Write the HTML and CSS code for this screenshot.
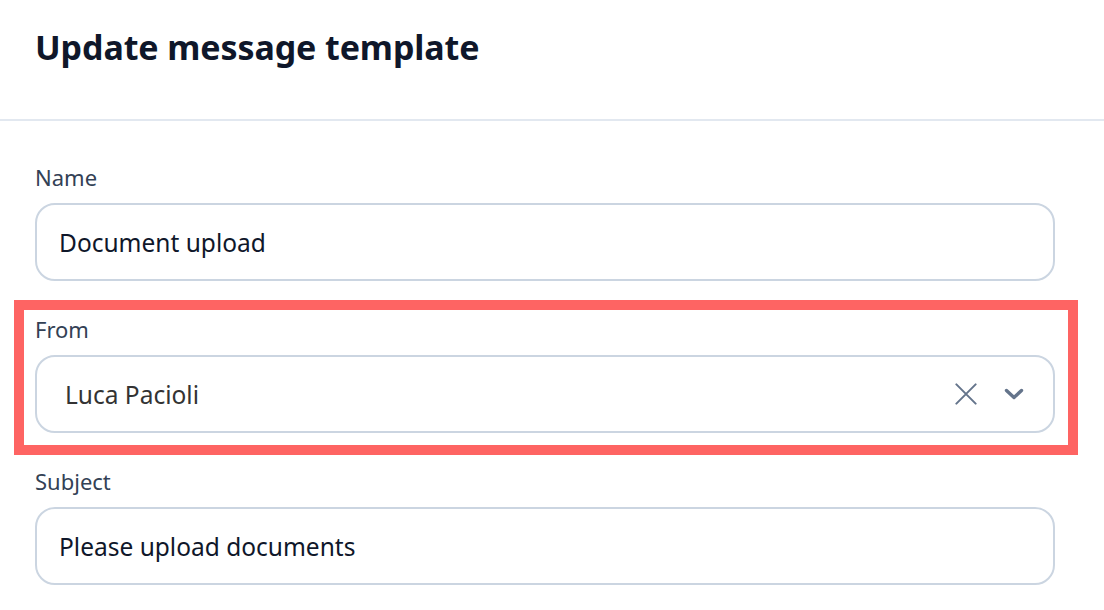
FILE: index.html
```html
<!DOCTYPE html>
<html lang="en">
<head>
<meta charset="utf-8">
<title>Update message template</title>
<link rel="stylesheet" href="styles.css">
</head>
<body>
<header class="header">
  <h1 class="title">Update message template</h1>
</header>
<main class="form">
  <div class="field">
    <label class="label">Name</label>
    <div class="input">Document upload</div>
  </div>
  <div class="field field-highlight">
    <label class="label">From</label>
    <div class="select">
      <span class="select-value">Luca Pacioli</span>
      <span class="select-icons">
        <svg class="icon-clear" width="24" height="24" viewBox="0 0 24 24" fill="none" stroke="#64748b" stroke-width="2.2" stroke-linecap="round"><path d="M1.5 1.5 L22.5 22.5 M22.5 1.5 L1.5 22.5"/></svg>
        <svg class="icon-chevron" width="20" height="12" viewBox="0 0 20 12" fill="none" stroke="#64748b" stroke-width="3.4" stroke-linecap="round" stroke-linejoin="round"><path d="M2.5 2.5 L10 9.5 L17.5 2.5"/></svg>
      </span>
    </div>
  </div>
  <div class="field">
    <label class="label">Subject</label>
    <div class="input">Please upload documents</div>
  </div>
</main>
</body>
</html>
```
FILE: styles.css
```css
* { box-sizing: border-box; }
html, body { margin: 0; padding: 0; background: #ffffff; }
body {
  font-family: "Noto Sans", "Open Sans", sans-serif;
  color: #0f172a;
  width: 1104px;
  height: 610px;
  overflow: hidden;
}
.header {
  height: 121px;
  border-bottom: 2px solid #e2e8f0;
  padding: 24px 0 0 35px;
}
.title {
  margin: 0;
  font-size: 34px;
  line-height: 46px;
  font-weight: 700;
  color: #0f172a;
  letter-spacing: -0.1px;
}
.form {
  padding: 42px 49px 0 35px;
  display: flex;
  flex-direction: column;
  gap: 34px;
}
.field { display: flex; flex-direction: column; }
.field-highlight { position: relative; }
.field-highlight::before {
  content: "";
  position: absolute;
  top: -15px;
  left: -21px;
  right: -23px;
  bottom: -22px;
  border: 10px solid #fe6463;
  pointer-events: none;
}
.label {
  font-size: 22px;
  line-height: 28px;
  color: #334155;
  margin-bottom: 12px;
}
.input, .select {
  height: 78px;
  border: 2px solid #cbd5e1;
  border-radius: 20px;
  display: flex;
  align-items: center;
  font-size: 24.5px;
}
.input { padding-left: 22px; color: #0f172a; }
.select { padding: 0 29px 0 28px; justify-content: space-between; color: #333333; }
.select-icons { display: flex; align-items: center; gap: 26px; }
.icon-clear { width: 24px; height: 22px; }
.icon-chevron { width: 20px; height: 12px; }
```
